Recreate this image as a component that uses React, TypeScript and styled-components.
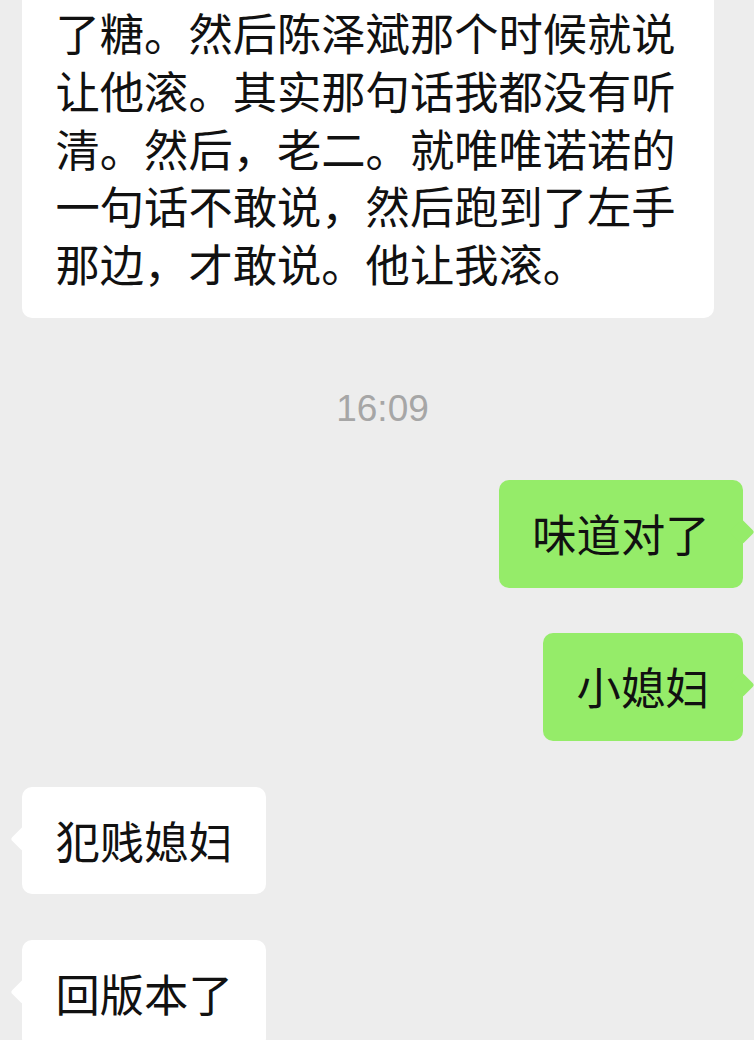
import React from "react";
import styled, { createGlobalStyle, css } from "styled-components";

const GlobalStyle = createGlobalStyle`
  html, body {
    margin: 0;
    padding: 0;
    background: #ededed;
    overflow: hidden;
  }
  body {
    font-family: "Noto Sans CJK SC", "Noto Sans", sans-serif;
  }
`;

const Screen = styled.div`
  width: 754px;
  height: 1040px;
  overflow: hidden;
  background: #ededed;
`;

const ChatList = styled.div`
  display: flex;
  flex-direction: column;
  gap: 45.5px;
  padding: 0 11px 0 22px;
`;

const Row = styled.div<{ $mine?: boolean }>`
  display: flex;
  justify-content: ${(p) => (p.$mine ? "flex-end" : "flex-start")};
`;

const Bubble = styled.div<{ $mine?: boolean; $continued?: boolean }>`
  position: relative;
  max-width: 692px;
  box-sizing: border-box;
  padding: 25px 33.5px;
  border-radius: 10px;
  background: ${(p) => (p.$mine ? "#95ec69" : "#ffffff")};
  color: #111111;
  font-size: 44.3px;
  line-height: 57.8px;
  word-break: break-all;

  &::before {
    content: "";
    position: absolute;
    top: 43px;
    width: 18px;
    height: 18px;
    background: inherit;
    border-radius: 3px;
    transform: rotate(45deg);
    ${(p) => (p.$mine ? css`right: -8px;` : css`left: -8px;`)}
  }

  ${(p) =>
    p.$continued &&
    css`
      padding-top: 4px;
      border-top-left-radius: 0;
      border-top-right-radius: 0;
      &::before {
        display: none;
      }
    `}
`;

const Timestamp = styled.div`
  align-self: center;
  margin: 24px 0 3px;
  font-family: "Liberation Sans", Arial, sans-serif;
  font-size: 37px;
  line-height: 44px;
  color: #a6a6a6;
`;

type Msg =
  | { kind: "time"; text: string }
  | { kind: "msg"; text: string; mine?: boolean; continued?: boolean };

const messages: Msg[] = [
  {
    kind: "msg",
    continued: true,
    text:
      "了糖。然后陈泽斌那个时候就说让他滚。其实那句话我都没有听清。然后，老二。就唯唯诺诺的一句话不敢说，然后跑到了左手那边，才敢说。他让我滚。",
  },
  { kind: "time", text: "16:09" },
  { kind: "msg", mine: true, text: "味道对了" },
  { kind: "msg", mine: true, text: "小媳妇" },
  { kind: "msg", text: "犯贱媳妇" },
  { kind: "msg", text: "回版本了" },
];

export default function App() {
  return (
    <Screen>
      <GlobalStyle />
      <ChatList>
        {messages.map((m, i) =>
          m.kind === "time" ? (
            <Timestamp key={i}>{m.text}</Timestamp>
          ) : (
            <Row key={i} $mine={m.mine}>
              <Bubble $mine={m.mine} $continued={m.continued}>
                {m.text}
              </Bubble>
            </Row>
          )
        )}
      </ChatList>
    </Screen>
  );
}
